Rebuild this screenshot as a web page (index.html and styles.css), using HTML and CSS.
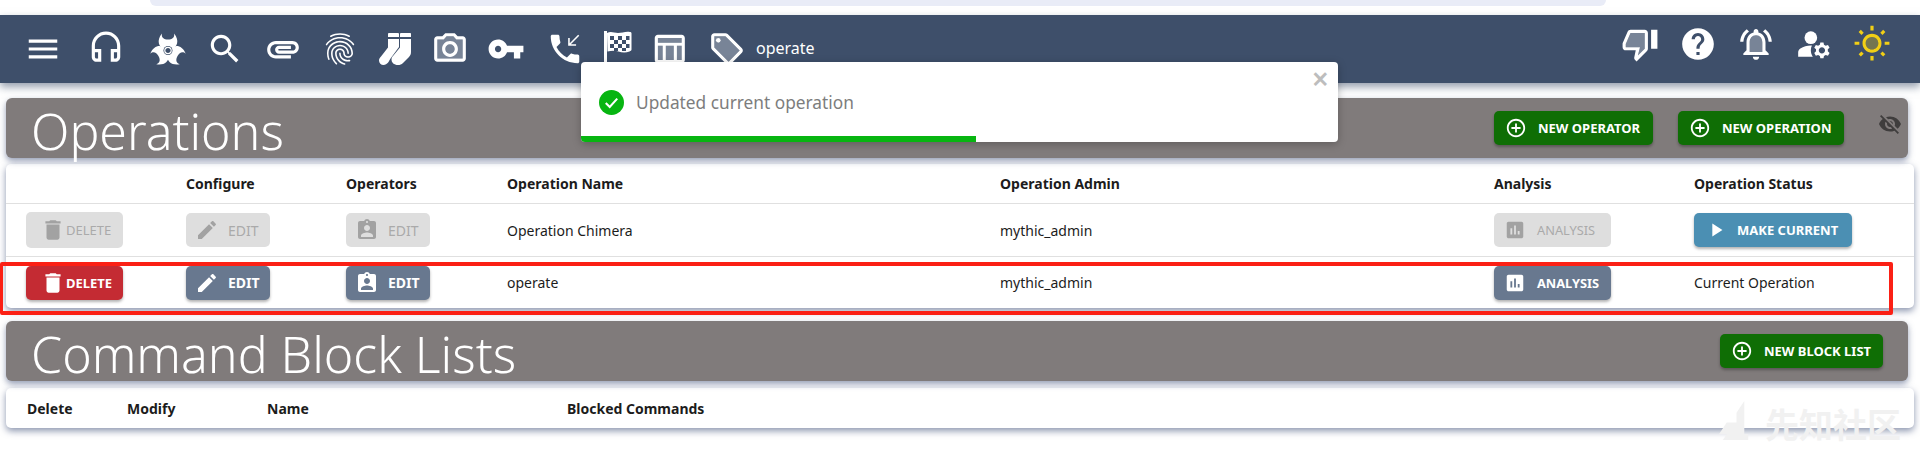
FILE: index.html
```html
<!DOCTYPE html>
<html lang="en">
<head>
    <meta charset="UTF-8">
    <title>Operations</title>
    <link rel="stylesheet" href="styles.css">
</head>
<body>
    <svg class="icon-defs" xmlns="http://www.w3.org/2000/svg">
        <symbol id="i-menu" viewBox="0 0 24 24"><path d="M3 18h18v-2H3v2zm0-5h18v-2H3v2zm0-7v2h18V6H3z"/></symbol>
        <symbol id="i-headset" viewBox="0 0 24 24"><path d="M12 1c-4.97 0-9 4.03-9 9v7c0 1.66 1.34 3 3 3h3v-8H5v-2c0-3.87 3.13-7 7-7s7 3.13 7 7v2h-4v8h3c1.66 0 3-1.34 3-3v-7c0-4.97-4.03-9-9-9zM7 14v4H6c-.55 0-1-.45-1-1v-3h2zm12 3c0 .55-.45 1-1 1h-1v-4h2v3z"/></symbol>
        <symbol id="i-bio" viewBox="-18 -17.500 36 32">
            <path d="M-6-17C-12-10-9-3-4-2L4-2C9-3 12-10 6-17C7-13 4-11 0-11S-7-13-6-17z"/>
            <path transform="rotate(120)" d="M-6-17C-12-10-9-3-4-2L4-2C9-3 12-10 6-17C7-13 4-11 0-11S-7-13-6-17z"/>
            <path transform="rotate(240)" d="M-6-17C-12-10-9-3-4-2L4-2C9-3 12-10 6-17C7-13 4-11 0-11S-7-13-6-17z"/>
            <circle r="4.500" fill="#3e4f6a"/>
            <circle r="3.200" fill="none" stroke="#fff" stroke-width="1.200"/>
        </symbol>
        <symbol id="i-search" viewBox="0 0 24 24"><path d="M15.5 14h-.79l-.28-.27C15.41 12.59 16 11.11 16 9.5 16 5.91 13.09 3 9.5 3S3 5.91 3 9.5 5.91 16 9.5 16c1.61 0 3.09-.59 4.23-1.57l.27.28v.79l5 4.99L20.49 19l-4.99-5zm-6 0C7.01 14 5 11.99 5 9.5S7.01 5 9.5 5 14 7.01 14 9.5 11.99 14 9.5 14z"/></symbol>
        <symbol id="i-clip" viewBox="0 0 24 24"><path d="M2 12.5C2 9.46 4.46 7 7.5 7H18c2.21 0 4 1.79 4 4s-1.79 4-4 4H9.5C8.12 15 7 13.88 7 12.5S8.12 10 9.5 10H17v2H9.41c-.55 0-.55 1 0 1H18c1.1 0 2-.9 2-2s-.9-2-2-2H7.5C5.57 9 4 10.57 4 12.5S5.57 16 7.5 16H17v2H7.5C4.46 18 2 15.54 2 12.5z"/></symbol>
        <symbol id="i-finger" viewBox="0 0 24 24"><path d="M17.81 4.47c-.08 0-.16-.02-.23-.06C15.66 3.42 14 3 12.01 3c-1.98 0-3.86.47-5.57 1.41-.24.13-.54.04-.68-.2-.13-.24-.04-.55.2-.68C7.82 2.52 9.86 2 12.01 2c2.13 0 3.99.47 6.03 1.52.25.13.34.43.21.67-.09.18-.26.28-.44.28zM3.5 9.72c-.1 0-.2-.03-.29-.09-.23-.16-.28-.47-.12-.7.99-1.4 2.25-2.5 3.75-3.27C9.98 4.04 14 4.03 17.15 5.65c1.5.77 2.76 1.86 3.75 3.25.16.22.11.54-.12.7-.23.16-.54.11-.7-.12-.9-1.26-2.04-2.25-3.39-2.94-2.87-1.47-6.54-1.47-9.4.01-1.36.7-2.5 1.7-3.4 2.96-.08.14-.23.21-.39.21zm6.25 12.07c-.13 0-.26-.05-.35-.15-.87-.87-1.34-1.43-2.01-2.64-.69-1.23-1.05-2.73-1.05-4.34 0-2.97 2.54-5.39 5.66-5.39s5.66 2.42 5.66 5.39c0 .28-.22.5-.5.5s-.5-.22-.5-.5c0-2.42-2.09-4.39-4.66-4.39-2.57 0-4.66 1.97-4.66 4.39 0 1.44.32 2.77.93 3.85.64 1.15 1.08 1.64 1.85 2.42.19.2.19.51 0 .71-.11.1-.24.15-.37.15zm7.17-1.85c-1.19 0-2.24-.3-3.1-.89-1.49-1.01-2.38-2.65-2.38-4.39 0-.28.22-.5.5-.5s.5.22.5.5c0 1.41.72 2.74 1.94 3.56.71.48 1.54.71 2.54.71.24 0 .64-.03 1.04-.1.27-.05.53.13.58.41.05.27-.13.53-.41.58-.57.11-1.07.12-1.21.12zM14.91 22c-.04 0-.09-.01-.13-.02-1.59-.44-2.63-1.03-3.72-2.1-1.4-1.39-2.17-3.24-2.17-5.22 0-1.62 1.38-2.94 3.08-2.94 1.7 0 3.08 1.32 3.08 2.94 0 1.07.93 1.94 2.08 1.94s2.08-.87 2.08-1.94c0-3.77-3.25-6.83-7.25-6.83-2.84 0-5.44 1.58-6.61 4.03-.39.81-.59 1.76-.59 2.8 0 .78.07 2.01.67 3.61.1.26-.03.55-.29.64-.26.1-.55-.04-.64-.29-.49-1.31-.73-2.61-.73-3.96 0-1.2.23-2.29.68-3.24 1.33-2.79 4.28-4.6 7.51-4.6 4.55 0 8.25 3.51 8.25 7.83 0 1.62-1.38 2.94-3.08 2.94s-3.08-1.32-3.08-2.94c0-1.07-.93-1.94-2.08-1.94s-2.08.87-2.08 1.94c0 1.71.66 3.31 1.87 4.51.95.94 1.86 1.46 3.27 1.85.27.07.42.35.35.61-.05.23-.26.38-.47.38z"/></symbol>
        <symbol id="i-socks" viewBox="0 0 33 32"><path d="M10 0h9c.5 0 1 .5 1 1v3H9V1c0-.5.5-1 1-1zM9 6h11v8l-1.500 2-7 9.500C10 28 8.500 32 4.500 32 2 32 0 30 0 27.500c0-1.500.7-2.700 2-4L9 14.500zM22 0h9c.6 0 1 .4 1 1v3H21V1c0-.5.5-1 1-1zM21 6h11v13c0 2-.6 3.500-2 5l-6 6c-1.500 1.500-3 2-5 2-4 0-6.500-2.500-6.500-5.500 0-1.500.5-2.500 1.500-3.500l7-8.500z"/></symbol>
        <symbol id="i-camera" viewBox="0 0 24 24"><path opacity=".3" d="M20 18H4V6h4.050l1.830-2h4.240l1.830 2H20v12z"/><path d="M20 4h-3.170L15 2H9L7.170 4H4c-1.100 0-2 .9-2 2v12c0 1.100.9 2 2 2h16c1.100 0 2-.9 2-2V6c0-1.100-.9-2-2-2zm0 14H4V6h4.050l1.830-2h4.240l1.830 2H20v12zM12 7c-2.760 0-5 2.240-5 5s2.240 5 5 5 5-2.240 5-5-2.240-5-5-5zm0 8c-1.650 0-3-1.350-3-3s1.350-3 3-3 3 1.350 3 3-1.350 3-3 3z"/></symbol>
        <symbol id="i-key" viewBox="0 0 24 24"><path d="M12.650 10C11.830 7.670 9.610 6 7 6c-3.310 0-6 2.690-6 6s2.690 6 6 6c2.610 0 4.830-1.670 5.650-4H17v4h4v-4h2v-4H12.650zM7 14c-1.100 0-2-.9-2-2s.9-2 2-2 2 .9 2 2-.9 2-2 2z"/></symbol>
        <symbol id="i-phone" viewBox="0 0 24 24"><path d="M20 15.500c-1.250 0-2.450-.2-3.570-.57-.35-.11-.74-.03-1.020.24l-2.200 2.200c-2.830-1.440-5.150-3.750-6.590-6.590l2.200-2.210c.28-.26.36-.65.25-1C8.700 6.450 8.500 5.250 8.500 4c0-.55-.45-1-1-1H4c-.55 0-1 .45-1 1 0 9.390 7.610 17 17 17 .55 0 1-.45 1-1v-3.500c0-.55-.45-1-1-1zM20.300 3l.7.7-5.300 5.300H19v1h-5V5h1v3.300z"/></symbol>
        <symbol id="i-flag" viewBox="0 0 29 36"><path d="M1 0h3v36H1z"/><path fill-rule="evenodd" d="M4 2c4-2 7 0 11 0s8-2 12-1c1 0 1.500.5 1.500 1.500v16c0 1-1 1.500-2 2-4 1.500-8 1-11 0s-7-1-11 0zM7 5h4v4H7zM15 5h4v4h-4zM23 5h3.500v4H23zM11 9h4v4h-4zM19 9h4v4h-4zM7 13h4v4H7zM15 13h4v4h-4zM23 13h3.500v4H23zM11 17h4v3h-4zM19 17h4v3h-4z"/></symbol>
        <symbol id="i-table" viewBox="0 0 24 24"><path opacity=".3" d="M5 5h15v3H5zm12 5h3v9h-3zm-7 0h5v9h-5zm-5 0h3v9H5z"/><path d="M20 3H5c-1.100 0-2 .9-2 2v14c0 1.100.9 2 2 2h15c1.100 0 2-.9 2-2V5c0-1.100-.9-2-2-2zM8 19H5v-9h3v9zm7 0h-5v-9h5v9zm5 0h-3v-9h3v9zm0-11H5V5h15v3z"/></symbol>
        <symbol id="i-tag" viewBox="0 0 24 24"><path opacity=".3" d="M11 4H4v7l9 9.010L20 13l-9-9zM6.500 8C5.670 8 5 7.330 5 6.500S5.670 5 6.500 5 8 5.670 8 6.500 7.330 8 6.500 8z"/><path d="M21.410 11.580l-9-9C12.050 2.220 11.550 2 11 2H4c-1.100 0-2 .9-2 2v7c0 .55.22 1.050.59 1.420l9 9c.36.36.86.58 1.410.58s1.050-.22 1.410-.59l7-7c.37-.36.59-.86.59-1.410s-.23-1.060-.59-1.420zM13 20.010L4 11V4h7v-.01l9 9-7 7.020z"/><circle cx="6.500" cy="6.500" r="1.500"/></symbol>
        <symbol id="i-thumb" viewBox="0 0 24 24"><path opacity=".3" d="M3 12v2h9l-1.340 5.340L15 15V5H6z"/><path d="M15 3H6c-.83 0-1.540.5-1.840 1.220l-3.020 7.050c-.09.23-.14.47-.14.73v2c0 1.100.9 2 2 2h6.310l-.95 4.570-.03.32c0 .41.17.79.44 1.060L9.830 23l6.590-6.590c.36-.36.58-.86.58-1.410V5c0-1.100-.9-2-2-2zm0 12l-4.340 4.340L12 14H3v-2l3-7h9v10zm4-12h4v12h-4z"/></symbol>
        <symbol id="i-help" viewBox="0 0 24 24"><path d="M12 2C6.480 2 2 6.480 2 12s4.480 10 10 10 10-4.480 10-10S17.520 2 12 2zm1 17h-2v-2h2v2zm2.070-7.750l-.9.92C13.450 12.900 13 13.500 13 15h-2v-.5c0-1.100.45-2.100 1.170-2.830l1.240-1.260c.37-.36.59-.86.59-1.410 0-1.100-.9-2-2-2s-2 .9-2 2H8c0-2.210 1.790-4 4-4s4 1.790 4 4c0 .88-.36 1.680-.93 2.250z"/></symbol>
        <symbol id="i-bell" viewBox="0 0 24 24"><path opacity=".3" d="M12 6.500c-2.490 0-4 2.020-4 4.500v6h8v-6c0-2.480-1.510-4.500-4-4.500z"/><path d="M12 22c1.100 0 2-.9 2-2h-4c0 1.100.9 2 2 2zm6-6v-5c0-3.070-1.630-5.640-4.500-6.320V4c0-.83-.67-1.500-1.500-1.500s-1.500.67-1.500 1.500v.68C7.640 5.360 6 7.920 6 11v5l-2 2v1h16v-1l-2-2zm-2 1H8v-6c0-2.480 1.510-4.500 4-4.500s4 2.020 4 4.500v6zM7.580 4.080L6.150 2.650C3.750 4.480 2.170 7.300 2.030 10.500h2c.15-2.650 1.510-4.970 3.550-6.420zm12.390 6.420h2c-.15-3.200-1.730-6.020-4.120-7.850l-1.420 1.430c2.020 1.450 3.390 3.770 3.540 6.420z"/></symbol>
        <symbol id="i-user" viewBox="0 0 24 24"><circle cx="10" cy="8" r="4"/><path d="M10.670 13.020c-.22-.01-.44-.02-.67-.02-2.420 0-4.680.67-6.610 1.820-.88.52-1.390 1.500-1.390 2.530V20h9.260c-.79-1.130-1.260-2.510-1.260-4 0-1.070.25-2.070.67-2.980zM20.750 16c0-.22-.03-.42-.06-.63l1.140-1.010-1-1.730-1.450.49c-.32-.27-.68-.48-1.080-.63L18 11h-2l-.3 1.490c-.4.15-.76.36-1.080.63l-1.450-.49-1 1.730 1.140 1.010c-.03.21-.06.41-.06.63s.03.42.06.63l-1.140 1.010 1 1.730 1.450-.49c.32.27.68.48 1.080.63L16 21h2l.3-1.490c.4-.15.76-.36 1.080-.63l1.450.49 1-1.730-1.140-1.010c.03-.21.06-.41.06-.63zM17 18c-1.100 0-2-.9-2-2s.9-2 2-2 2 .9 2 2-.9 2-2 2z"/></symbol>
        <symbol id="i-sun" viewBox="0 0 24 24"><path opacity=".3" d="M12 7.500c-2.210 0-4 1.790-4 4s1.790 4 4 4 4-1.790 4-4-1.790-4-4-4z"/><path d="M5.340 6.250l1.420-1.410-1.800-1.790-1.410 1.410zM1 10.500h3v2H1zM11 .55h2V3.500h-2zm7.660 5.705l-1.410-1.407 1.790-1.790 1.406 1.410zM17.240 18.160l1.790 1.800 1.410-1.410-1.800-1.790zM20 10.500h3v2h-3zm-8-5c-3.310 0-6 2.690-6 6s2.690 6 6 6 6-2.690 6-6-2.690-6-6-6zm0 10c-2.210 0-4-1.790-4-4s1.790-4 4-4 4 1.790 4 4-1.790 4-4 4zm-1 4h2v2.950h-2zm-7.450-.96l1.410 1.410 1.790-1.800-1.410-1.410z"/></symbol>
        <symbol id="i-add" viewBox="0 0 24 24"><path d="M13 7h-2v4H7v2h4v4h2v-4h4v-2h-4V7zm-1-5C6.480 2 2 6.480 2 12s4.480 10 10 10 10-4.480 10-10S17.520 2 12 2zm0 18c-4.410 0-8-3.590-8-8s3.590-8 8-8 8 3.590 8 8-3.590 8-8 8z"/></symbol>
        <symbol id="i-eye" viewBox="0 0 24 24"><path d="M12 7c2.760 0 5 2.240 5 5 0 .65-.13 1.260-.36 1.830l2.920 2.920c1.510-1.260 2.700-2.890 3.430-4.750-1.730-4.390-6-7.500-11-7.500-1.400 0-2.740.25-3.980.7l2.160 2.160C10.740 7.130 11.350 7 12 7zM2 4.270l2.280 2.280.46.46C3.080 8.300 1.780 10.020 1 12c1.730 4.390 6 7.500 11 7.500 1.550 0 3.030-.3 4.380-.84l.42.42L19.730 22 21 20.730 3.270 3 2 4.270zM7.530 9.800l1.550 1.550c-.05.21-.08.43-.08.65 0 1.660 1.340 3 3 3 .22 0 .44-.03.65-.08l1.550 1.550c-.67.33-1.410.53-2.200.53-2.760 0-5-2.240-5-5 0-.79.2-1.530.53-2.200zm4.310-.78l3.150 3.150.02-.16c0-1.660-1.340-3-3-3l-.17.01z"/></symbol>
        <symbol id="i-delete" viewBox="0 0 24 24"><path d="M6 19c0 1.100.9 2 2 2h8c1.100 0 2-.9 2-2V7H6v12zM19 4h-3.500l-1-1h-5l-1 1H5v2h14V4z"/></symbol>
        <symbol id="i-edit" viewBox="0 0 24 24"><path d="M3 17.250V21h3.750L17.810 9.940l-3.750-3.750L3 17.250zM20.710 7.040c.39-.39.39-1.020 0-1.410l-2.340-2.340c-.39-.39-1.020-.39-1.410 0l-1.830 1.830 3.750 3.750 1.830-1.830z"/></symbol>
        <symbol id="i-assign" viewBox="0 0 24 24"><path d="M19 3h-4.180C14.400 1.840 13.300 1 12 1c-1.300 0-2.400.84-2.820 2H5c-1.100 0-2 .9-2 2v14c0 1.100.9 2 2 2h14c1.100 0 2-.9 2-2V5c0-1.100-.9-2-2-2zm-7 0c.55 0 1 .45 1 1s-.45 1-1 1-1-.45-1-1 .45-1 1-1zm0 4c1.660 0 3 1.340 3 3s-1.340 3-3 3-3-1.340-3-3 1.340-3 3-3zm6 12H6v-1.400c0-2 4-3.100 6-3.100s6 1.100 6 3.100V19z"/></symbol>
        <symbol id="i-chart" viewBox="0 0 24 24"><path d="M19 3H5c-1.100 0-2 .9-2 2v14c0 1.100.9 2 2 2h14c1.100 0 2-.9 2-2V5c0-1.100-.9-2-2-2zM9 17H7v-7h2v7zm4 0h-2V7h2v10zm4 0h-2v-4h2v4z"/></symbol>
        <symbol id="i-play" viewBox="0 0 24 24"><path d="M8 5v14l11-7z"/></symbol>
    </svg>

    <div class="top-strip"></div>

    <nav class="navbar">
        <svg class="nav-icon ic-menu"><use href="#i-menu"/></svg>
        <svg class="nav-icon ic-headset"><use href="#i-headset"/></svg>
        <svg class="nav-icon ic-bio"><use href="#i-bio"/></svg>
        <svg class="nav-icon"><use href="#i-search"/></svg>
        <svg class="nav-icon"><use href="#i-clip"/></svg>
        <svg class="nav-icon ic-finger"><use href="#i-finger"/></svg>
        <svg class="nav-icon ic-socks"><use href="#i-socks"/></svg>
        <svg class="nav-icon ic-camera"><use href="#i-camera"/></svg>
        <svg class="nav-icon ic-key"><use href="#i-key"/></svg>
        <svg class="nav-icon ic-phone"><use href="#i-phone"/></svg>
        <svg class="nav-icon ic-flag"><use href="#i-flag"/></svg>
        <svg class="nav-icon ic-table"><use href="#i-table"/></svg>
        <svg class="nav-icon"><use href="#i-tag"/></svg>
        <span class="nav-operation">operate</span>
        <div class="nav-right">
            <svg class="nav-icon"><use href="#i-thumb"/></svg>
            <svg class="nav-icon"><use href="#i-help"/></svg>
            <svg class="nav-icon"><use href="#i-bell"/></svg>
            <svg class="nav-icon"><use href="#i-user"/></svg>
            <svg class="nav-icon ic-sun"><use href="#i-sun"/></svg>
        </div>
    </nav>

    <div class="section-header section-ops">
        <h1>Operations</h1>
        <button class="btn btn-green btn-operator"><svg><use href="#i-add"/></svg>New Operator</button>
        <button class="btn btn-green btn-operation"><svg><use href="#i-add"/></svg>New Operation</button>
        <svg class="hide-icon"><use href="#i-eye"/></svg>
    </div>

    <div class="table-card ops-table">
        <div class="ops-row ops-head">
            <div></div>
            <div>Configure</div>
            <div>Operators</div>
            <div>Operation Name</div>
            <div>Operation Admin</div>
            <div>Analysis</div>
            <div>Operation Status</div>
        </div>
        <div class="ops-row ops-first">
            <div><button class="btn btn-delete btn-off"><svg><use href="#i-delete"/></svg>Delete</button></div>
            <div><button class="btn btn-edit btn-off"><svg><use href="#i-edit"/></svg>Edit</button></div>
            <div><button class="btn btn-edit btn-off"><svg><use href="#i-assign"/></svg>Edit</button></div>
            <div>Operation Chimera</div>
            <div>mythic_admin</div>
            <div><button class="btn btn-analysis btn-off"><svg><use href="#i-chart"/></svg>Analysis</button></div>
            <div><button class="btn btn-current"><svg><use href="#i-play"/></svg>Make Current</button></div>
        </div>
        <div class="ops-row ops-last">
            <div><button class="btn btn-delete btn-red"><svg><use href="#i-delete"/></svg>Delete</button></div>
            <div><button class="btn btn-edit btn-slate"><svg><use href="#i-edit"/></svg>Edit</button></div>
            <div><button class="btn btn-edit btn-slate"><svg><use href="#i-assign"/></svg>Edit</button></div>
            <div>operate</div>
            <div>mythic_admin</div>
            <div><button class="btn btn-analysis btn-slate"><svg><use href="#i-chart"/></svg>Analysis</button></div>
            <div>Current Operation</div>
        </div>
    </div>

    <div class="section-header section-block">
        <h1>Command Block Lists</h1>
        <button class="btn btn-green btn-block"><svg><use href="#i-add"/></svg>New Block List</button>
    </div>

    <div class="table-card block-table">
        <div class="block-row">
            <div>Delete</div>
            <div>Modify</div>
            <div>Name</div>
            <div>Blocked Commands</div>
        </div>
    </div>

    <!-- what lies over the page -->
    <div class="red-box"></div>

    <div class="toast">
        <svg class="toast-check" viewBox="0 0 24 24"><circle cx="12" cy="12" r="12"/><path d="M6.500 12.500l3.800 3.800 7.200-8" /></svg>
        <span class="toast-text">Updated current operation</span>
        <span class="toast-close">×</span>
        <div class="toast-bar"></div>
    </div>

    <div class="watermark">
        <svg viewBox="0 0 36 40"><path d="M26 0v34H0l8-12h10V12zM30 34H8l-4 6h26z"/></svg>
        <span>先知社区</span>
    </div>
</body>
</html>
```

FILE: styles.css
```css
* { box-sizing: border-box; }
html, body { margin: 0; height: 450px; overflow: hidden; }
body {
    position: relative;
    background: #fff;
    font-family: "Noto Sans", "Open Sans", sans-serif;
    color: #1c1c1c;
}
.icon-defs { display: none; }

.top-strip {
    height: 6px;
    margin: 0 314px 0 150px;
    background: #e9ecf7;
    border-radius: 0 0 14px 14px;
}

/* navbar */
.navbar {
    height: 68px;
    margin-top: 9px;
    background: #3e4f6a;
    color: #fff;
    display: flex;
    align-items: center;
    box-shadow: 0 4px 8px rgba(62, 79, 106, .55);
    padding-left: 24px;
}
.nav-icon { width: 38px; height: 38px; fill: currentColor; flex: none; margin-left: 20px; }
.ic-menu { margin-left: 0; }
.ic-headset { margin-left: 25px; }
.ic-bio { margin-left: 25px; width: 36px; height: 32px; }
.ic-finger, .ic-camera { margin-left: 19px; }
.ic-socks { width: 33px; height: 32px; }
.ic-key, .ic-table { margin-left: 18px; }
.ic-phone { margin-left: 21px; }
.ic-flag { margin-left: 19px; width: 29px; height: 36px; }
.ic-sun { color: #f2cf15; }
.nav-operation { font-size: 16px; margin-left: 10px; margin-top: -2px; }
.nav-right { margin-left: auto; margin-right: 29px; margin-bottom: 11px; display: flex; align-items: center; }

/* grey section bars */
.section-header {
    height: 60px;
    margin-left: 6px;
    margin-right: 12px;
    background: #807b7b;
    border-radius: 6px;
    display: flex;
    align-items: center;
    box-shadow: 0 3px 6px rgba(62, 79, 120, .55);
    position: relative;
}
.section-ops { margin-top: 15px; }
.section-block { margin-top: 13px; }
.section-header h1 {
    margin: 5px auto 0 25px;
    color: #fff;
    font-size: 50px;
    font-weight: 300;
    line-height: 60px;
}
.hide-icon { width: 24px; height: 24px; fill: #3f3d3d; margin: -8px 6px 0 34px; }

/* buttons */
.btn {
    height: 34px;
    border: 0;
    border-radius: 5px;
    font-family: inherit;
    font-size: 13px;
    font-weight: 700;
    text-transform: uppercase;
    color: #fff;
    display: inline-flex;
    align-items: center;
    white-space: nowrap;
    box-shadow: 0 2px 3px rgba(0, 0, 0, .3);
    padding: 0;
}
.btn svg { width: 22px; height: 22px; fill: currentColor; flex: none; }
.btn-green { background: #0f6e05; padding-left: 11px; }
.btn-green svg { margin-right: 11px; }
.btn-operator { width: 159px; }
.btn-operation { width: 166px; margin-left: 25px; }
.btn-block { width: 163px; margin-right: 25px; }

.btn-delete { width: 97px; padding-left: 14px; }
.btn-delete svg { width: 26px; height: 26px; margin-right: 0; }
.btn-edit { width: 84px; padding-left: 9px; font-size: 14px; }
.btn-edit svg { width: 24px; height: 24px; margin-right: 9px; }
.btn-analysis { width: 117px; padding-left: 10px; font-size: 12.800px; }
.btn-analysis svg { margin-right: 11px; }
.btn-current { width: 158px; padding-left: 11px; background: #4b8fb3; }
.btn-current svg { margin-right: 10px; }

.btn-red { background: #c42b33; }
.btn-slate { background: #68788f; }
.btn-off { background: #dedede; color: #aaa; box-shadow: none; font-weight: 400; }
.btn-off svg { fill: #a2a2a2; }
.ops-first .btn-delete { height: 36px; }

/* tables */
.table-card {
    background: #fff;
    margin-left: 6px;
    margin-right: 6px;
    border-radius: 5px;
    box-shadow: 0 3px 7px rgba(62, 79, 120, .6);
}
.ops-table { margin-top: 6px; }
.block-table { margin-top: 7px; height: 40px; }

.ops-row {
    display: grid;
    grid-template-columns: 160px 160px 161px 493px 494px 200px 1fr;
    padding-left: 20px;
    align-items: center;
    font-size: 14px;
    border-bottom: 1px solid #e0e0e0;
}
.ops-row > div { display: flex; align-items: center; }
.ops-head { height: 40px; font-weight: 700; }
.ops-first { height: 53px; }
.ops-last { height: 51px; border-bottom: 0; }

.block-row {
    display: grid;
    grid-template-columns: 100px 140px 300px 1fr;
    padding-left: 21px;
    height: 40px;
    align-items: center;
    font-size: 14px;
    font-weight: 700;
}

/* annotation over the second row */
.red-box {
    position: absolute;
    left: 0;
    top: 262px;
    width: 1893px;
    height: 53px;
    border: 4px solid #fb2015;
    border-left-width: 3px;
    border-radius: 2px;
}

.toast {
    position: absolute;
    left: 581px;
    top: 62px;
    width: 757px;
    height: 80px;
    background: #fff;
    border-radius: 4px;
    box-shadow: 0 2px 8px rgba(0, 0, 0, .25);
    display: flex;
    align-items: center;
    padding-left: 18px;
}
.toast-check { width: 25px; height: 25px; flex: none; }
.toast-check circle { fill: #07b511; }
.toast-check path { fill: none; stroke: #fff; stroke-width: 2; }
.toast-text { margin-left: 12px; font-size: 17.300px; color: #7d7d7d; }
.toast-close {
    position: absolute;
    right: 9px;
    top: 0;
    font-size: 30px;
    line-height: 34px;
    color: #bdbdbd;
    font-weight: 600;
}
.toast-bar {
    position: absolute;
    left: 0;
    bottom: 0;
    height: 6px;
    width: 395px;
    background: #07b511;
    border-radius: 0 0 0 4px;
}

.watermark {
    position: absolute;
    left: 1718px;
    top: 401px;
    display: flex;
    align-items: flex-start;
    gap: 10px;
    color: #f1f1f1;
    font-family: "Noto Sans CJK SC", sans-serif;
    font-size: 34px;
    font-weight: 700;
    line-height: 40px;
    pointer-events: none;
}
.watermark span { margin-top: 3px; }
.watermark svg { width: 37px; height: 39px; fill: #f1f1f1; }
```
